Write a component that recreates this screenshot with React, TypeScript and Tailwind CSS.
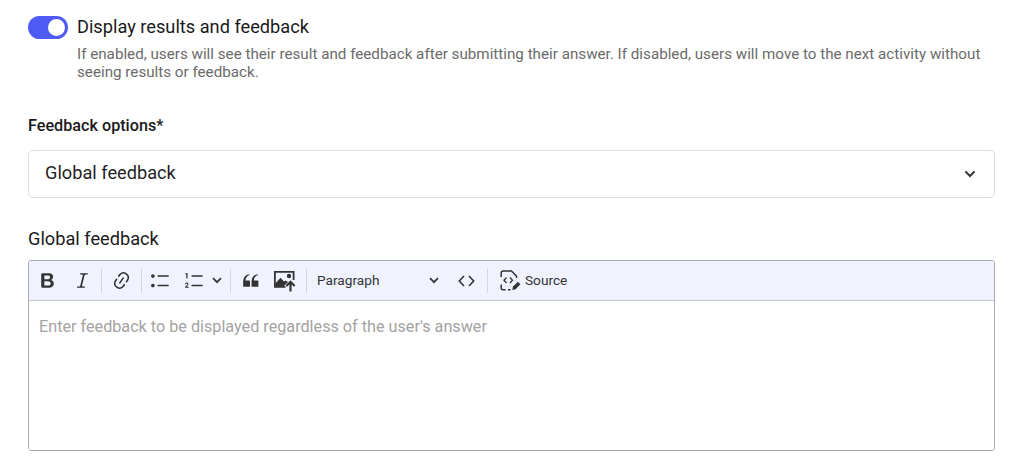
import React from "react";

const Sep = ({ className = "mx-[2px]" }: { className?: string }) => <div className={`w-px h-[24px] bg-[#d5d7dc] ${className}`} />;
const Btn = ({ children, w = 36 }: { children: React.ReactNode; w?: number }) => (
  <div className="flex items-center justify-center h-[28px] shrink-0" style={{ width: w }}>{children}</div>
);
const Chevron = ({ className = "", sw = 1.5 }: { className?: string; sw?: number }) => (
  <svg viewBox="0 0 10 7" className={className} fill="none" stroke="#333" strokeWidth={sw}>
    <path d="M1 1.2 L5 5.2 L9 1.2" />
  </svg>
);
const Icon = ({ d, size = 21 }: { d: string; size?: number }) => (
  <svg width={size} height={size} viewBox="0 0 20 20" fill="#333"><path d={d} /></svg>
);

const bold = "M10.187 17H5.773c-.637 0-1.092-.138-1.364-.415-.273-.277-.409-.718-.409-1.323V4.738c0-.617.14-1.062.419-1.332.279-.27.73-.406 1.354-.406h4.68c.69 0 1.288.041 1.793.124.506.083.96.242 1.36.478.341.197.644.447.906.75a3.262 3.262 0 0 1 .808 2.162c0 1.401-.722 2.426-2.167 3.075C15.05 10.175 16 11.315 16 13.01a3.756 3.756 0 0 1-2.296 3.504 6.1 6.1 0 0 1-1.517.377c-.571.073-1.238.11-2 .11zm-.217-6.217H7v4.087h3.069c1.977 0 2.965-.69 2.965-2.072 0-.707-.256-1.22-.768-1.537-.512-.319-1.277-.478-2.296-.478zM7 5.13v3.619h2.606c.729 0 1.292-.067 1.69-.2a1.6 1.6 0 0 0 .91-.765c.165-.267.247-.566.247-.897 0-.707-.26-1.176-.778-1.409-.519-.232-1.31-.348-2.375-.348H7z";
const italic = "m9.586 14.633.021.004c-.036.335.095.655.393.962.082.083.173.15.274.201h1.474a.6.6 0 1 1 0 1.2H5.304a.6.6 0 0 1 0-1.2h1.15c.474-.07.809-.182 1.005-.334.157-.122.291-.32.404-.597l2.416-9.55a1.053 1.053 0 0 0-.281-.823 1.12 1.12 0 0 0-.442-.296H8.15a.6.6 0 0 1 0-1.2h6.443a.6.6 0 1 1 0 1.2h-1.195c-.376.056-.65.155-.823.296-.215.175-.423.439-.623.79l-2.366 9.347z";
const link = "m11.077 15 .991-1.416a.75.75 0 1 1 1.229.86l-1.148 1.64a.748.748 0 0 1-.217.206 5.251 5.251 0 0 1-8.503-5.955.741.741 0 0 1 .12-.274l1.147-1.639a.75.75 0 1 1 1.228.86L4.933 10.7l.006.003a3.75 3.75 0 0 0 6.132 4.294l.006.004zm5.494-5.335a.748.748 0 0 1-.12.274l-1.147 1.639a.75.75 0 1 1-1.228-.86l.86-1.23a3.75 3.75 0 0 0-6.144-4.301l-.86 1.229a.75.75 0 0 1-1.229-.86l1.148-1.64a.748.748 0 0 1 .217-.206 5.251 5.251 0 0 1 8.503 5.955zm-4.563-2.532a.75.75 0 0 1 .184 1.045l-3.155 4.505a.75.75 0 1 1-1.229-.86l3.155-4.506a.75.75 0 0 1 1.045-.184z";
const bullets = "M7 5.75c0 .414.336.75.75.75h9.5a.75.75 0 1 0 0-1.5h-9.5a.75.75 0 0 0-.75.75zm-6 0C1 4.784 1.777 4 2.75 4c.966 0 1.75.777 1.75 1.75 0 .966-.777 1.75-1.75 1.75C1.784 7.5 1 6.723 1 5.75zm6 9c0 .414.336.75.75.75h9.5a.75.75 0 1 0 0-1.5h-9.5a.75.75 0 0 0-.75.75zm-6 0c0-.966.777-1.75 1.75-1.75.966 0 1.75.777 1.75 1.75 0 .966-.777 1.75-1.75 1.75-.966 0-1.75-.777-1.75-1.75z";
const quote = "M3 10.423a6.5 6.5 0 0 1 6.056-6.408l.038.67C6.448 5.423 5.354 7.663 5.22 10H9c.552 0 .5.432.5.986v4.511c0 .554-.448.503-1 .503h-5c-.552 0-.5-.449-.5-1.003v-4.574zm8 0a6.5 6.5 0 0 1 6.056-6.408l.038.67c-2.646.739-3.74 2.979-3.873 5.315H17c.552 0 .5.432.5.986v4.511c0 .554-.448.503-1 .503h-5c-.552 0-.5-.449-.5-1.003v-4.574z";

export default function App() {
  return (
    <div className="w-[1024px] h-[472px] bg-white overflow-hidden pl-[28px] pr-[29px] pt-[16px] font-['Roboto',sans-serif]">
      <div className="flex gap-[9px]">
        <div className="w-[40px] h-[23px] rounded-full bg-[#4f5bf5] flex items-center justify-end pr-[3px] shrink-0">
          <div className="w-[17px] h-[17px] rounded-full bg-white" />
        </div>
        <div className="flex-1">
          <div className="text-[18.22px] leading-[22px] text-[#1a1a1a]">Display results and feedback</div>
          <div className="text-[15.19px] leading-[18px] text-[#6b6b6b] mt-[7px]">
            If enabled, users will see their result and feedback after submitting their answer. If disabled, users will move to the next activity without seeing results or feedback.
          </div>
        </div>
      </div>

      <div className="text-[16.2px] leading-[20px] font-medium text-[#1a1a1a] mt-[35px]">Feedback options*</div>
      <div className="mt-[14px] h-[48px] border border-[#dedede] rounded-[5px] flex items-center justify-between pl-[16px] pr-[18px] pb-[2px] text-[18.22px] text-[#1f1f1f]">
        <span>Global feedback</span>
        <Chevron className="w-[12px] h-[8px] mt-[2px]" sw={1.8} />
      </div>

      <div className="text-[18.22px] leading-[22px] text-[#1a1a1a] mt-[30px]">Global feedback</div>
      <div className="mt-[10px] h-[191px] border border-[#a9abb3] rounded-[3px] overflow-hidden flex flex-col">
        <div className="h-[40px] bg-[#f0f3ff] border-b border-[#c8cad0] flex items-center text-[#333] shrink-0">
          <Btn w={36}><Icon d={bold} /></Btn>
          <Btn w={34}><Icon d={italic} /></Btn>
          <Sep />
          <Btn w={35}><Icon d={link} /></Btn>
          <Sep />
          <Btn w={32}><Icon d={bullets} /></Btn>
          <Btn w={36}>
            <svg width="21" height="21" viewBox="0 0 20 20" fill="#333">
              <path d="M7 5.75c0 .41.34.75.75.75h9.5a.75.75 0 1 0 0-1.5h-9.5a.75.75 0 0 0-.75.75z" />
              <path d="M7 14.75c0 .41.34.75.75.75h9.5a.75.75 0 1 0 0-1.5h-9.5a.75.75 0 0 0-.75.75z" />
              <path d="M3.4 3v5H2.2V4.1l-1 .3v-1L3 2.9z" />
              <path d="M1 17v-.9l2-2.1c.5-.6.2-1.2-.4-1.2-.5 0-.8.4-.8.8H.9c0-1 .8-1.6 1.8-1.6 1.3 0 2 1.2 1.2 2.3l-1.3 1.7h1.9v1z" />
            </svg>
          </Btn>
          <Chevron className="w-[10px] h-[7px] shrink-0" sw={1.7} />
          <Sep className="ml-[8px] mr-[2px]" />
          <Btn w={34}><Icon d={quote} /></Btn>
          <Btn w={34}>
            <svg width="23" height="22" viewBox="0 0 23 22">
              <path d="M12.5 16.8H1.9V1.9H20.6V10" fill="none" stroke="#333" strokeWidth="1.8" />
              <path d="M2.5 16 V13.2 L7.5 7.8 L11 11.6 L12.5 10.4 L15 12 L11 16 Z" fill="#333" />
              <circle cx="16" cy="6" r="2.2" fill="#333" />
              <path d="M17.5 21.5 V12.5 M13.4 16 L17.5 11.8 L21.6 16" fill="none" stroke="#333" strokeWidth="2.2" />
            </svg>
          </Btn>
          <Sep className="ml-[5px] mr-0" />
          <div className="w-[143px] pl-[10px] pr-[11px] flex items-center justify-between text-[13.67px] text-[#333] shrink-0">
            <span>Paragraph</span>
            <Chevron className="w-[10px] h-[7px]" sw={1.7} />
          </div>
          <Btn w={32}>
            <svg width="17" height="12" viewBox="0 0 17 12" fill="none" stroke="#333" strokeWidth="1.6">
              <path d="M6 1 L1.3 6 L6 11 M11 1 L15.7 6 L11 11" />
            </svg>
          </Btn>
          <Sep className="ml-[5px] mr-0" />
          <div className="flex items-center gap-[4px] pl-[12px] text-[13.67px] text-[#333]">
            <svg width="21" height="21" viewBox="0 0 21 21" fill="none" stroke="#333" strokeWidth="1.5">
              <path d="M1.2 7 V3 C1.2 1.8 1.9 1 3 1 H11.5 L16.5 6 V8" />
              <path d="M1.2 14.5 V18 C1.2 19 1.9 19.7 3 19.7 H5.5 M8 19.7 H10.5" />
              <path d="M6.5 7.5 L4 10.2 L6.5 13 M10 7.5 L12.5 10.2 L10 13" strokeWidth="1.3" />
              <path d="M12.3 20 L13 16.5 L18 11.8 L20.4 14.2 L15.6 19.2 Z" fill="#333" stroke="none" />
            </svg>
            <span>Source</span>
          </div>
        </div>
        <div className="flex-1 bg-white pl-[10px] pt-[16px] text-[16.2px] leading-[20px] text-[#a3a3a3]">
          Enter feedback to be displayed regardless of the user's answer
        </div>
      </div>
    </div>
  );
}
